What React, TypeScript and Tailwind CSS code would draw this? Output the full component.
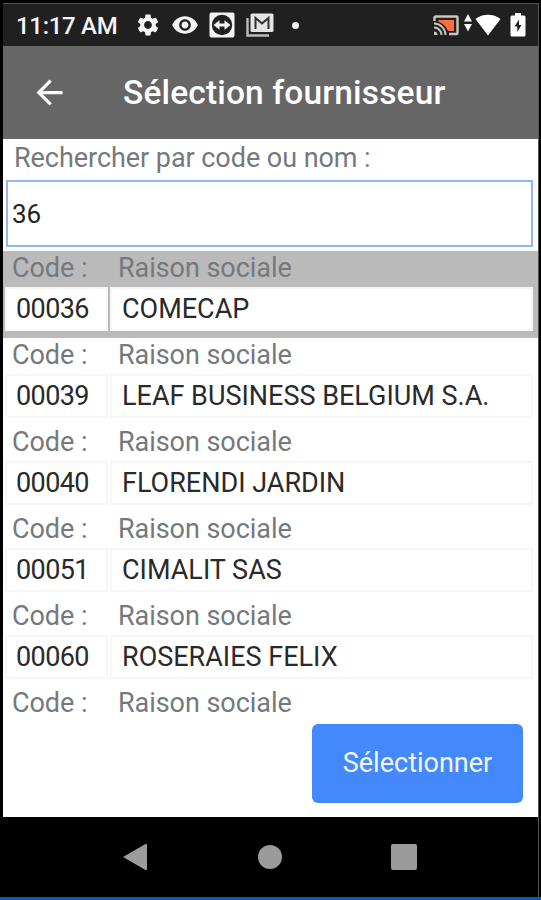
import { MdArrowBack, MdSettings, MdVisibility } from "react-icons/md";

const suppliers = [
  { code: "00036", name: "COMECAP" },
  { code: "00039", name: "LEAF BUSINESS BELGIUM S.A." },
  { code: "00040", name: "FLORENDI JARDIN" },
  { code: "00051", name: "CIMALIT SAS" },
  { code: "00060", name: "ROSERAIES FELIX" },
];

function RowLabels() {
  return (
    <div className="flex h-9 items-center pb-[2px] text-[27px] leading-none tracking-[-0.05px]">
      <span className="w-[106px] pl-[9px]">Code :</span>
      <span className="pl-[9px]">Raison sociale</span>
    </div>
  );
}

function StatusBar() {
  return (
    <div className="flex h-[43px] items-center border-t border-[#555] bg-[#202020] pl-[13px] text-[#f4f4f4]">
      <span className="w-[119px] pt-px text-[24px] leading-none font-medium tracking-[-0.3px] whitespace-nowrap">
        11:17 AM
      </span>
      <MdSettings className="size-[26px] shrink-0" />
      <MdVisibility className="ml-[10px] size-7 shrink-0" />

      {/* Remote control */}
      <svg className="ml-[10px] h-[26px] w-[26px] shrink-0" viewBox="0 0 26 26">
        <rect x="0.5" y="0.5" width="25" height="25" rx="2" fill="#f4f4f4" />
        <circle cx="13" cy="13" r="10.2" fill="#202020" />
        <path d="M4.500 13l6-4.800v3.300h5V8.200l6 4.800-6 4.800v-3.300h-5v3.300z" fill="#f4f4f4" />
      </svg>

      {/* Mail */}
      <svg className="ml-[11px] h-6 w-7 shrink-0" viewBox="0 0 28 24" fill="none">
        <path d="M1.500 5v17.500H23" stroke="#bdbdbd" strokeWidth="2.4" />
        <rect x="4.500" y="0.500" width="23" height="18.500" rx="1.500" fill="#e4e4e4" />
        <path d="M9.500 16V5l6.500 5.500L22.500 5v11" stroke="#303030" strokeWidth="2" />
      </svg>
      <span className="ml-[18px] size-[7px] shrink-0 rounded-full bg-[#f4f4f4]" />

      <div className="mr-[12px] ml-auto flex items-center">
        {/* Cast */}
        <svg className="h-[21px] w-[26px]" viewBox="0 0 26 21" fill="none">
          <path d="M5.500 5h15.500v11H15C13 11 10 8.500 5.500 7z" fill="#ff6c3e" />
          <path d="M1.500 6V2.500a1 1 0 0 1 1-1h21a1 1 0 0 1 1 1v15.500a1 1 0 0 1-1 1H16" stroke="#c8c8c0" strokeWidth="2.4" />
          <path d="M1 8.500A11.500 11.500 0 0 1 12.500 20M1 12.500A7.500 7.500 0 0 1 8.500 20" stroke="#c8c8c0" strokeWidth="2" />
          <path d="M1 16.500A3.500 3.500 0 0 1 4.500 20H1z" fill="#c8c8c0" />
        </svg>
        <svg className="mb-[4px] ml-[5px] h-[18px] w-2" viewBox="0 0 8 18" fill="#f4f4f4">
          <path d="M4 0l4 7.500H0zM0 10h8l-4 7.500z" />
        </svg>
        <svg className="ml-[3px] h-[22px] w-[26px]" viewBox="0 0 26 22" fill="#fff">
          <path d="M0.500 5C7.500-.8 18.500-.8 25.500 5L13 21.500z" />
        </svg>
        <svg className="ml-[9px] h-6 w-4" viewBox="0 0 16 24">
          <path d="M5 0h6v2.500h3A1.500 1.500 0 0 1 15.500 4v18a1.500 1.500 0 0 1-1.500 1.500H2A1.500 1.500 0 0 1 .500 22V4A1.500 1.500 0 0 1 2 2.500h3z" fill="#fff" />
          <path d="M9 6.500L4.500 13.500H7.300V19L11.500 12H9z" fill="#202020" />
        </svg>
      </div>
    </div>
  );
}

export default function App() {
  return (
    <div className="flex h-[900px] w-[541px] flex-col overflow-hidden border-b-[3px] border-[#0d5cb5] bg-black pt-[3px] pr-[2px] pl-[3px] font-['Roboto',sans-serif]">
      <div className="flex h-[814px] flex-col border-r border-[#555] bg-white text-[#75797d]">
        <StatusBar />

        <header className="flex h-[93px] shrink-0 items-center bg-[#666] text-white">
          <MdArrowBack className="ml-[27px] size-[39px]" />
          <h1 className="ml-[54px] pt-px text-[33.5px] leading-none font-medium tracking-[0.15px] whitespace-nowrap">
            Sélection fournisseur
          </h1>
        </header>

        <label className="flex h-[41px] shrink-0 items-center pb-[2px] pl-[11px] text-[27px] leading-none tracking-[-0.05px]">
          Rechercher par code ou nom :
        </label>
        <input
          className="ml-[3px] h-[67px] w-[527px] shrink-0 border-2 border-[#8fb7f8] bg-white pl-[4px] text-[26px] text-[#222] outline-none"
          defaultValue="36"
        />

        <div className="mt-[4px] h-[471px] shrink-0 overflow-hidden">
          {suppliers.map((s, i) => (
            <div key={s.code} className={i === 0 ? "h-[87px] bg-[#bababa]" : "h-[87px]"}>
              <RowLabels />
              <div className="flex h-11 gap-[2px] pl-[2px] text-[27px] leading-none text-[#2a2a2a]">
                <div className="flex w-[103px] items-center border-2 border-[#f6f6f6] bg-white pl-[9px] tracking-[-0.6px]">
                  {s.code}
                </div>
                <div className="flex w-[423px] items-center border-2 border-[#f6f6f6] bg-white pl-[10px] whitespace-nowrap">
                  {s.name}
                </div>
              </div>
            </div>
          ))}
          <RowLabels />
        </div>

        <button className="mt-[2px] mr-[15px] h-[79px] w-[211px] shrink-0 self-end rounded-md bg-[#4488fe] text-[27px] text-[#f2f7ff]">
          Sélectionner
        </button>
      </div>

      <nav className="flex h-20 items-center border-r border-[#555] bg-black">
        <svg className="ml-[119px] h-7 w-[26px]" viewBox="0 0 26 28" fill="#9b9b9b">
          <path d="M1 14L23.500 1a1 1 0 0 1 1.500 1v24a1 1 0 0 1-1.500 1z" />
        </svg>
        <span className="ml-[110px] size-6 rounded-full bg-[#9b9b9b]" />
        <span className="ml-[109px] size-[26px] rounded-[2px] bg-[#9b9b9b]" />
      </nav>
    </div>
  );
}
